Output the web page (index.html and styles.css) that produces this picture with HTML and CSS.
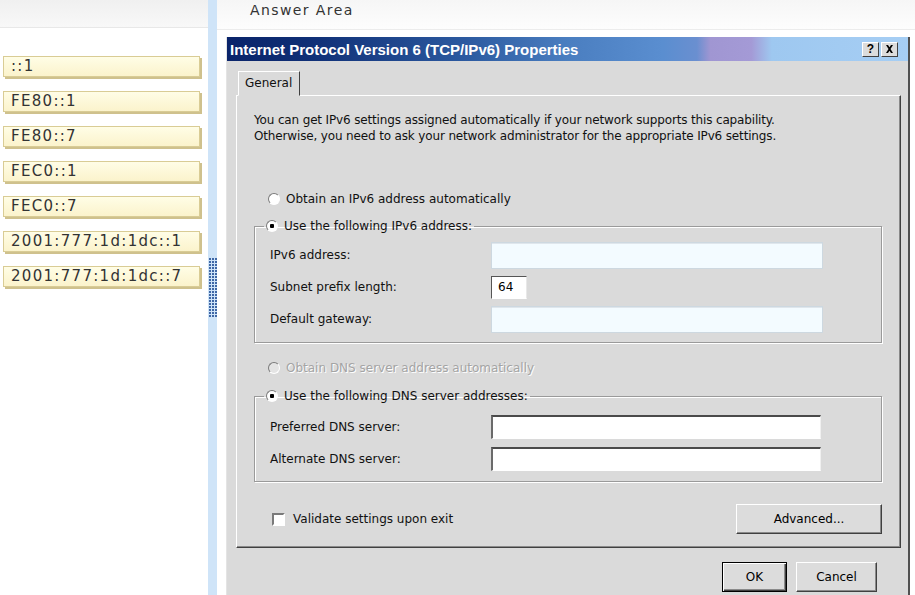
FILE: index.html
```html
<!DOCTYPE html>
<html lang="en">
<head>
  <meta charset="UTF-8">
  <meta name="viewport" content="width=device-width, initial-scale=1.0">
  <title>Answer Area</title>
  <link rel="stylesheet" href="styles.css">
</head>
<body>

  <div class="page">
    <div class="source-pane">
      <div class="pane-header"></div>
      <ul class="choices">
        <li class="choice">::1</li>
        <li class="choice">FE80::1</li>
        <li class="choice">FE80::7</li>
        <li class="choice">FEC0::1</li>
        <li class="choice">FEC0::7</li>
        <li class="choice">2001:777:1d:1dc::1</li>
        <li class="choice">2001:777:1d:1dc::7</li>
      </ul>
    </div>

    <div class="splitter"><div class="grip"></div></div>

    <div class="answer-pane">
      <div class="answer-header">Answer Area</div>

      <div class="dialog">
        <div class="titlebar">
          <span class="title">Internet Protocol Version 6 (TCP/IPv6) Properties</span>
          <div class="title-buttons">
            <span class="title-btn">?</span>
            <span class="title-btn">
              <svg width="9" height="8" viewBox="0 0 9 8"><path d="M1 0h2l1.5 2.2L6 0h2L5.5 4 8 8H6L4.5 5.8 3 8H1l2.5-4z" fill="#000"/></svg>
            </span>
          </div>
        </div>

        <div class="dialog-body">
          <div class="tabs"><span class="tab">General</span></div>

          <div class="tab-panel">
            <p class="intro">You can get IPv6 settings assigned automatically if your network supports this capability.<br>Otherwise, you need to ask your network administrator for the appropriate IPv6 settings.</p>

            <label class="option first-option"><input type="radio" name="addr" class="radio"> Obtain an IPv6 address automatically</label>

            <fieldset class="group">
              <legend class="option"><input type="radio" name="addr" class="radio" checked> Use the following IPv6 address:</legend>
              <div class="field-row">
                <span class="field-label">IPv6 address:</span>
                <input type="text" class="field-input faded wide" disabled>
              </div>
              <div class="field-row">
                <span class="field-label">Subnet prefix length:</span>
                <input type="text" class="field-input prefix" value="64">
              </div>
              <div class="field-row">
                <span class="field-label">Default gateway:</span>
                <input type="text" class="field-input faded wide" disabled>
              </div>
            </fieldset>

            <label class="option dns-option disabled-text"><input type="radio" name="dns" class="radio" disabled> Obtain DNS server address automatically</label>

            <fieldset class="group dns-group">
              <legend class="option"><input type="radio" name="dns" class="radio" checked> Use the following DNS server addresses:</legend>
              <div class="field-row">
                <span class="field-label">Preferred DNS server:</span>
                <input type="text" class="field-input dns">
              </div>
              <div class="field-row">
                <span class="field-label">Alternate DNS server:</span>
                <input type="text" class="field-input dns">
              </div>
            </fieldset>

            <div class="panel-footer">
              <label class="check"><input type="checkbox" class="checkbox"> Validate settings upon exit</label>
              <button type="button" class="btn advanced">Advanced...</button>
            </div>
          </div>

          <div class="dialog-actions">
            <button type="button" class="btn btn-default">OK</button>
            <button type="button" class="btn cancel">Cancel</button>
          </div>
        </div>
      </div>
    </div>
  </div>

</body>
</html>
```

FILE: styles.css
```css
* {
  box-sizing: border-box;
}

body {
  margin: 0;
  width: 915px;
  height: 595px;
  overflow: hidden;
  background: #fff;
  font-family: "DejaVu Sans", Verdana, sans-serif;
}

.page {
  display: flex;
  height: 595px;
}

/* left column with the draggable values */
.source-pane {
  width: 208px;
  flex: none;
}

.pane-header {
  height: 28px;
  background: linear-gradient(#f0f0f0, #f8f8f8);
  border-bottom: 1px solid #e8e8e8;
}

.choices {
  list-style: none;
  margin: 0;
  padding: 28px 0 0 3px;
  display: flex;
  flex-direction: column;
  gap: 14px;
}

.choice {
  width: 197px;
  height: 21px;
  padding-left: 7px;
  background: linear-gradient(#fffde6, #fbf3cc);
  border: 1px solid #d9cc95;
  box-shadow: 2px 2px 0 #cfc18d;
  color: #333;
  font-size: 15px;
  letter-spacing: 1.3px;
  line-height: 19px;
}

.splitter {
  width: 9px;
  flex: none;
  background: #cfe4f8;
  padding-top: 258px;
}

.grip {
  width: 8px;
  height: 60px;
  margin-left: 1px;
  background-color: #3f67a6;
  background-image: linear-gradient(90deg, transparent 2px, #cfe4f8 2px),
                    linear-gradient(transparent 2px, #cfe4f8 2px);
  background-size: 3px 3px;
}

.answer-pane {
  flex: 1;
  min-width: 0;
}

.answer-header {
  height: 30px;
  padding: 2px 0 0 33px;
  background: linear-gradient(#f6f6f6, #fdfdfd);
  border-bottom: 1px solid #ececec;
  color: #333;
  font-size: 14px;
  letter-spacing: 1.4px;
}

/* the windows dialog */
.dialog {
  width: 684px;
  height: 560px;
  margin: 7px 0 0 9px;
  background: #dadada;
  border-right: 2px solid #505050;
  border-left: 1px solid #e4e4e4;
}

.titlebar {
  height: 24px;
  display: flex;
  align-items: center;
  justify-content: space-between;
  padding: 0 10px 0 3px;
  background: linear-gradient(90deg, #0a246a 0%, #0f2f76 12%, #2c5aa0 35%, #4a7ec0 50%, #5a8ed0 64%, #6a8fd0 69%, #a096d2 71%, #a49ad6 77%, #9ec8f0 80%, #a6cef4 100%);
}

.title {
  color: #fff;
  font: bold 15px "Liberation Sans", Arial, sans-serif;
}

.title-buttons {
  display: flex;
  gap: 2px;
}

.title-btn {
  width: 17px;
  height: 15px;
  display: flex;
  align-items: center;
  justify-content: center;
  background: #dcdcdc;
  border: 1px solid;
  border-color: #fff #404040 #404040 #fff;
  font: bold 12px "Liberation Sans", Arial, sans-serif;
  line-height: 1;
}

.dialog-body {
  padding: 10px 8px 0 9px;
  font-size: 12px;
  color: #111;
}

.tabs {
  display: flex;
  padding-left: 2px;
}

.tab {
  position: relative;
  height: 25px;
  padding: 0 7px 0 6px;
  margin-bottom: -1px;
  background: #dadada;
  border: 1px solid;
  border-color: #fff #404040 transparent #fff;
  line-height: 23px;
}

.tab-panel {
  width: 665px;
  padding: 16px 18px 13px 17px;
  border: 1px solid;
  border-color: #fff #404040 #404040 #fff;
  box-shadow: inset -1px -1px 0 #8a8a8a;
}

.intro {
  margin: 0;
  line-height: 16px;
  letter-spacing: -0.15px;
}

.option {
  display: flex;
  align-items: center;
  gap: 6px;
  height: 16px;
  line-height: 16px;
}

.first-option {
  margin: 47px 0 0 14px;
}

.dns-option {
  margin: 17px 0 0 14px;
}

.disabled-text {
  color: #a4a4a4;
  text-shadow: 1px 1px 0 #fff;
}

.radio {
  appearance: none;
  margin: 0;
  width: 12px;
  height: 12px;
  border-radius: 50%;
  border: 1px solid;
  border-color: #7a7a7a #fff #fff #7a7a7a;
  background: #fff;
}

.radio:checked {
  background: radial-gradient(circle, #000 2px, #fff 2.5px);
}

.radio:disabled {
  background: #e4e4e4;
}

.group {
  margin: 11px 0 0;
  padding: 5px 15px 7px;
  border: 1px solid #9a9a9a;
  box-shadow: inset 1px 1px 0 #fff, 1px 1px 0 #fff;
  min-width: 0;
}

.dns-group {
  margin-top: 12px;
  padding-top: 7px;
  padding-bottom: 6px;
}

.group legend {
  padding: 0 2px;
  margin-left: -6px;
}

.field-row {
  display: flex;
  align-items: center;
  height: 32px;
}

.field-label {
  width: 221px;
  flex: none;
}

.field-input {
  font: 12px "DejaVu Sans", Verdana, sans-serif;
  color: #000;
  padding: 0 6px;
  margin: 0;
  outline: none;
}

.faded {
  width: 332px;
  height: 27px;
  background: #f3fbff;
  border: 1px solid #cdd8e0;
  box-shadow: inset 0 1px 0 #dfe6ec;
}

.prefix {
  width: 36px;
  height: 23px;
  background: #fff;
  border: 1px solid;
  border-color: #555 #e8e8e8 #fff #555;
}

.dns {
  width: 330px;
  height: 24px;
  background: #fff;
  border: 2px solid;
  border-color: #4a4a4a #f0f0f0 #fff #6a6a6a;
  border-bottom-width: 1px;
  border-right-width: 1px;
}

.panel-footer {
  display: flex;
  align-items: center;
  justify-content: space-between;
  margin-top: 22px;
}

.check {
  display: flex;
  align-items: center;
  gap: 8px;
  margin-left: 18px;
}

.checkbox {
  appearance: none;
  margin: 0;
  width: 13px;
  height: 13px;
  background: #fff;
  border: 2px solid;
  border-color: #7a7a7a #fff #fff #7a7a7a;
}

.btn {
  height: 30px;
  font: 12px "DejaVu Sans", Verdana, sans-serif;
  color: #000;
  background: #dcdcdc;
  border: 1px solid;
  border-color: #fff #404040 #404040 #fff;
  box-shadow: inset -1px -1px 0 #8a8a8a;
  padding: 0;
}

.advanced {
  width: 146px;
}

.dialog-actions {
  display: flex;
  justify-content: flex-end;
  gap: 9px;
  margin-top: 14px;
  padding-right: 23px;
}

.btn-default {
  width: 65px;
  border: 1px solid #000;
  box-shadow: inset 1px 1px 0 #fff, inset -1px -1px 0 #404040, inset -2px -2px 0 #8a8a8a;
}

.cancel {
  width: 81px;
}
```
